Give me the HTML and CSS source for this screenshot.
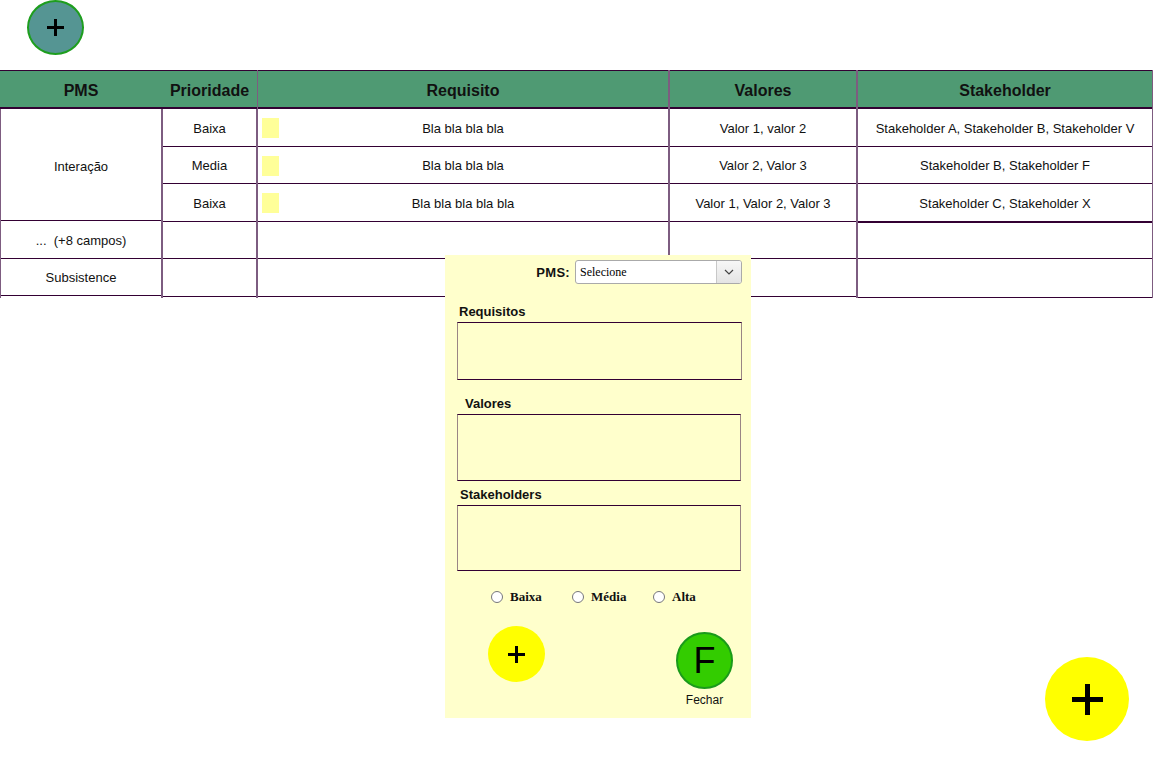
FILE: index.html
```html
<!DOCTYPE html>
<html lang="pt">
<head>
    <meta charset="UTF-8">
    <meta name="viewport" content="width=device-width, initial-scale=1.0">
    <title>Requisitos - PMS</title>
    <link rel="stylesheet" href="styles.css">
</head>
<body>
    <div class="toolbar">
        <button class="btn-round btn-top" type="button" aria-label="Adicionar">
            <svg width="17" height="17" viewBox="0 0 17 17"><path d="M8.5 0 V17 M0 8.5 H17" stroke="#000" stroke-width="3"/></svg>
        </button>
    </div>

    <div class="board">
        <div class="col col-pms">
            <div class="head">PMS</div>
            <div class="cell tall">Interação</div>
            <div class="cell">...&nbsp; (+8 campos)</div>
            <div class="cell">Subsistence</div>
        </div>

        <div class="col col-prio">
            <div class="head">Prioridade</div>
            <div class="cell">Baixa</div>
            <div class="cell">Media</div>
            <div class="cell">Baixa</div>
            <div class="cell"></div>
            <div class="cell"></div>
        </div>

        <div class="col col-req">
            <div class="head">Requisito</div>
            <div class="cell"><span class="note"></span>Bla bla bla bla</div>
            <div class="cell"><span class="note"></span>Bla bla bla bla</div>
            <div class="cell"><span class="note"></span>Bla bla bla bla bla</div>
            <div class="cell"></div>
            <div class="cell"></div>
        </div>

        <div class="col col-val">
            <div class="head">Valores</div>
            <div class="cell">Valor 1, valor 2</div>
            <div class="cell">Valor 2, Valor 3</div>
            <div class="cell">Valor 1, Valor 2, Valor 3</div>
            <div class="cell"></div>
            <div class="cell"></div>
        </div>

        <div class="col col-stake">
            <div class="head">Stakeholder</div>
            <div class="cell">Stakeholder A, Stakeholder B, Stakeholder V</div>
            <div class="cell">Stakeholder B, Stakeholder F</div>
            <div class="cell">Stakeholder C, Stakeholder X</div>
            <div class="cell split"></div>
            <div class="cell"></div>
        </div>
    </div>

    <!-- formulario de novo requisito -->
    <div class="popup">
        <div class="pms-row">
            <label for="pms">PMS:</label>
            <div class="select-wrap">
                <select id="pms">
                    <option>Selecione</option>
                    <option>Interação</option>
                    <option>Subsistence</option>
                </select>
                <span class="select-arrow">
                    <svg width="10" height="6" viewBox="0 0 10 6"><path d="M1 1 L5 5 L9 1" fill="none" stroke="#444" stroke-width="1.2"/></svg>
                </span>
            </div>
        </div>

        <label class="field-label" for="requisitos">Requisitos</label>
        <textarea id="requisitos" class="field req"></textarea>

        <label class="field-label lbl-val" for="valores">Valores</label>
        <textarea id="valores" class="field val"></textarea>

        <label class="field-label lbl-stake" for="stakeholders">Stakeholders</label>
        <textarea id="stakeholders" class="field stake"></textarea>

        <div class="radios">
            <label><input type="radio" name="prioridade"> Baixa</label>
            <label><input type="radio" name="prioridade"> Média</label>
            <label><input type="radio" name="prioridade"> Alta</label>
        </div>

        <div class="popup-actions">
            <button class="btn-round btn-add" type="button" aria-label="Adicionar">
                <svg width="17" height="17" viewBox="0 0 17 17"><path d="M8.5 0 V17 M0 8.5 H17" stroke="#000" stroke-width="3"/></svg>
            </button>
            <div class="close-box">
                <button class="btn-round btn-close" type="button">F</button>
                <span>Fechar</span>
            </div>
        </div>
    </div>

    <button class="btn-round btn-fab" type="button" aria-label="Novo">
        <svg width="31" height="31" viewBox="0 0 31 31"><path d="M15.5 0 V31 M0 15.5 H31" stroke="#000" stroke-width="5"/></svg>
    </button>
</body>
</html>
```

FILE: styles.css
```css
:root {
    --head: #4f9a73;
    --line: #330033;
    --side: #7d5c80;
    --note: #ffff99;
    --popup: #ffffcc;
}

body {
    margin: 0;
    font-family: "Liberation Sans", Arial, sans-serif;
    font-size: 13px;
    color: #111;
    background: #fff;
}

.btn-round {
    border-radius: 50%;
    border: none;
    padding: 0;
    font-family: "Liberation Sans", Arial, sans-serif;
    color: #000;
    display: flex;
    align-items: center;
    justify-content: center;
    cursor: pointer;
}

.toolbar {
    height: 70px;
    padding-left: 27px;
}

.btn-top {
    width: 57px;
    height: 55px;
    background: #559593;
    border: 2px solid #1e9e1e;
}

/* tabela */
.board {
    display: flex;
}

.col {
    border-left: 1px solid var(--side);
    border-right: 1px solid var(--side);
    display: flex;
    flex-direction: column;
}

.col-pms { width: 162px; }
.col-prio { width: 95px; }
.col-req { width: 412px; }
.col-val { width: 188px; }
.col-stake { width: 296px; }

.col, .col * {
    box-sizing: border-box;
}

.head {
    height: 39px;
    background: var(--head);
    border-top: 1px solid var(--line);
    border-bottom: 2px solid var(--line);
    font-size: 16px;
    font-weight: bold;
    display: flex;
    align-items: center;
    justify-content: center;
    padding-top: 3px;
}

.col-pms .head, .col-prio .head {
    margin: 0 -1px;
}

.cell {
    height: 37.5px;
    border-bottom: 1px solid var(--line);
    display: flex;
    align-items: center;
    justify-content: center;
    padding-top: 2px;
    position: relative;
    white-space: nowrap;
}

.cell.tall {
    height: 112px;
    padding-top: 4px;
}

.col-stake .cell.split {
    border-top: 1px solid var(--line);
}

.col-stake .cell:last-child {
    height: 38.5px;
}

.note {
    position: absolute;
    left: 4px;
    top: 9px;
    width: 17px;
    height: 20px;
    background: var(--note);
}

/* popup */
.popup {
    position: absolute;
    left: 445px;
    top: 255px;
    width: 306px;
    height: 463px;
    background: var(--popup);
    box-sizing: border-box;
    padding: 5px 9px 0 12px;
    display: flex;
    flex-direction: column;
}

.pms-row {
    display: flex;
    justify-content: flex-end;
    align-items: center;
    gap: 5px;
    height: 24px;
}

.pms-row label {
    font-weight: bold;
    font-size: 13px;
    letter-spacing: 0.3px;
}

.select-wrap {
    position: relative;
    width: 167px;
    height: 24px;
}

.select-wrap select {
    appearance: none;
    -webkit-appearance: none;
    width: 100%;
    height: 100%;
    border: 1px solid #aaa;
    border-radius: 3px;
    background: #fff;
    font-family: "Liberation Serif", "Times New Roman", serif;
    font-size: 12px;
    padding: 0 4px;
    color: #000;
}

.select-arrow {
    position: absolute;
    right: 1px;
    top: 1px;
    bottom: 1px;
    width: 24px;
    border-left: 1px solid #c8c8c8;
    border-radius: 0 2px 2px 0;
    background: linear-gradient(#f7f7f7, #e4e4e4);
    display: flex;
    align-items: center;
    justify-content: center;
    pointer-events: none;
}

.field-label {
    font-weight: bold;
    font-size: 13px;
    line-height: 14px;
    margin-left: 2px;
}

.field-label:first-of-type { margin-top: 21px; }
.lbl-val { margin-top: 17px; margin-left: 8px; }
.lbl-stake { margin-top: 7px; margin-left: 3px; }

.field {
    display: block;
    resize: none;
    background: var(--popup);
    border: 1px solid;
    border-color: var(--line) #9a8585 var(--line) #9a8585;
    box-sizing: border-box;
    margin: 3px 0 0 0;
    padding: 2px;
    font-family: "Liberation Sans", Arial, sans-serif;
    outline: none;
}

.field.req { width: 285px; height: 58px; }
.field.val { width: 284px; height: 67px; }
.field.stake { width: 284px; height: 66px; }

.radios {
    display: flex;
    margin-top: 18px;
    padding-left: 34px;
    font-family: "Liberation Serif", "Times New Roman", serif;
    font-weight: bold;
    font-size: 13px;
}

.radios label {
    display: flex;
    align-items: center;
    gap: 7px;
    width: 81px;
}

.radios input {
    margin: 0;
    width: 12px;
    height: 12px;
}

.popup-actions {
    display: flex;
    justify-content: space-between;
    align-items: flex-start;
    margin-top: 21px;
    padding: 0 9px 0 31px;
}

.btn-add {
    width: 57px;
    height: 56px;
    background: #ffff00;
}

.close-box {
    display: flex;
    flex-direction: column;
    align-items: center;
    margin-top: 6px;
    gap: 4px;
    font-size: 12px;
}

.btn-close {
    width: 57px;
    height: 57px;
    background: #33cc00;
    border: 2px solid #1a9a1a;
    font-size: 36px;
    line-height: 1;
}

.btn-fab {
    position: absolute;
    left: 1045px;
    top: 657px;
    width: 84px;
    height: 84px;
    background: #ffff00;
}
```
